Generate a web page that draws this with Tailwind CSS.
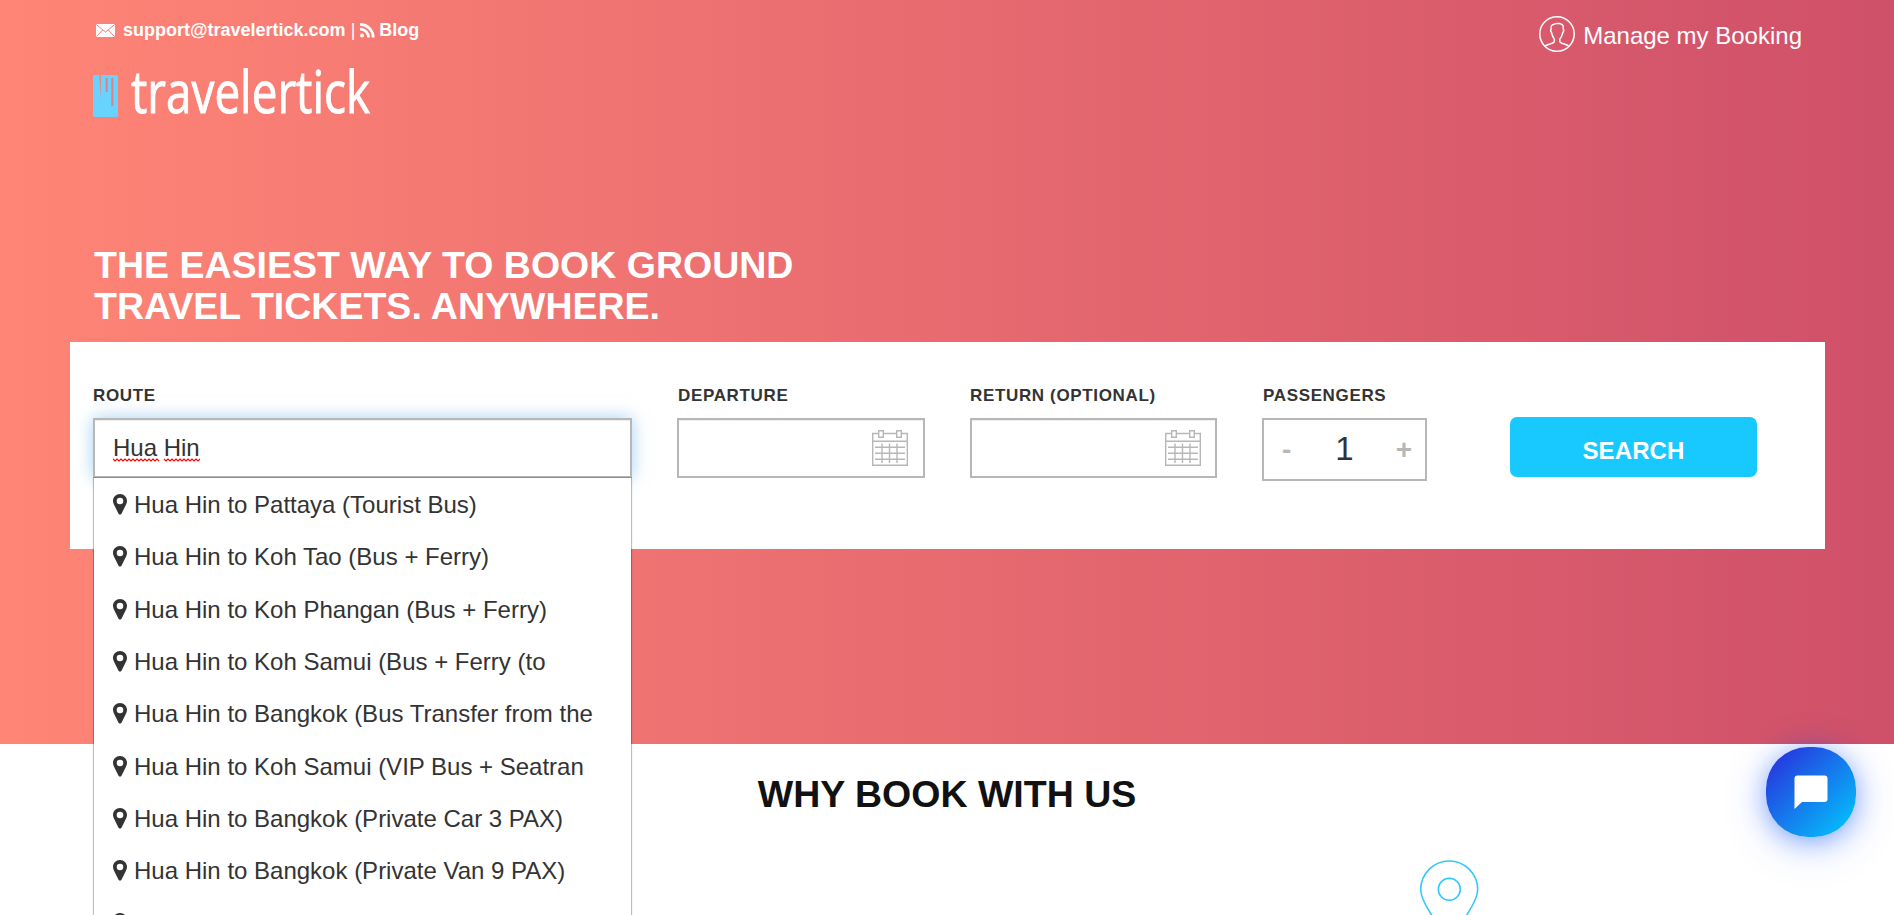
<!DOCTYPE html>
<html lang="en">
<head>
<meta charset="utf-8">
<title>Travelertick</title>
<script src="https://cdn.jsdelivr.net/npm/@tailwindcss/browser@4"></script>
</head>
<body class="h-[915px] overflow-hidden bg-white font-['Liberation_Sans',Arial,sans-serif] text-[#333]">
<svg class="hidden">
  <symbol id="pin" viewBox="0 0 14 21"><path fill="currentColor" fill-rule="evenodd" d="M7 0C3.100 0 0 3 0 6.800C0 7.900.200 8.900.700 9.900L5.500 19.700Q7 21.500 8.500 19.700L13.300 9.900C13.800 8.900 14 7.900 14 6.800C14 3 10.900 0 7 0ZM7 3.700A3.300 3.300 0 1 1 7 10.300A3.300 3.300 0 0 1 7 3.700Z"/></symbol>
  <symbol id="cal" viewBox="0 0 36 36"><g fill="none" stroke="#b7b7b7" stroke-width="1.400"><path d="M6.500 3.500H.700V35.300H35.300V3.500H29.500M11.500 3.500H24.500M.700 11.200H35.300M3 17.300H33M3 23.300H33M3 29.300H33M10 13.500V33M17.500 13.500V33M25 13.500V33"/><path d="M6.700.700h4.600v6.600H6.700zM24.700.700h4.600v6.600H24.700z"/></g></symbol>
</svg>
<div class="relative h-[915px] overflow-hidden">
  <header class="h-[744px] bg-[linear-gradient(to_right,#ff8576,#cf5069)] px-[70px]">
    <div class="flex h-[245px] justify-between px-[23px] text-white">
      <div class="pt-[19px]">
        <div class="flex h-[22px] items-center text-lg leading-[22px] font-bold">
          <svg class="ml-[3px] mr-[8px] h-[13px] w-[19px]" viewBox="0 0 19 13"><rect width="19" height="13" rx="1" fill="#fff"/><path d="M.5.700 9.500 8 18.500.7M.5 12.500 6.700 6M18.500 12.500 12.300 6" fill="none" stroke="#f87f75" stroke-width="1"/></svg>
          <span>support@travelertick.com</span>
          <span class="mx-[5px] font-normal">|</span>
          <svg class="mr-[4px] h-[15px] w-[15px]" viewBox="0 0 15 15"><g fill="none" stroke="#fff" stroke-width="2.800"><path d="M0 6.200A8.300 8.300 0 0 1 8.500 14.500M0 1.500A13 13 0 0 1 13.200 14.500"/></g><circle cx="2" cy="12.500" r="2" fill="#fff"/></svg>
          <span>Blog</span>
        </div>
        <svg class="mt-[1px] h-[110px] w-[290px] overflow-visible" viewBox="0 -20 290 110">
          <rect x="0" y="13" width="25" height="42" rx="1.500" fill="#68d3ff"/>
          <path d="M6.300 13h1.600v25z" fill="#f87f75"/><path d="M13.700 16V30M19.300 16V44" stroke="#dd8088" stroke-width="2"/>
          <text x="38" y="51" textLength="239" lengthAdjust="spacingAndGlyphs" font-family="Open Sans" font-size="59" fill="#fff" stroke="#fff" stroke-width=".9">travelertick</text>
        </svg>
      </div>
      <div class="-mr-px flex h-[68px] pt-[16px] text-2xl">
        <svg class="h-[36px] w-[36px]" viewBox="0 0 36 36" fill="none" stroke="#fff" stroke-width="1.500"><circle cx="18" cy="18" r="17.200"/><path d="M5.500 30.300C9 28 15.300 27.500 15.300 25.500V23C13.300 21 13 18 12.500 16.500C11.500 15.500 11.300 13.500 12.200 13C11.800 9.500 12.500 9 14 8.800C16 6.800 24.800 6.800 24.200 11V13C25 13.500 24.800 15.500 23.800 16.500C23.300 18 23 21 20.800 23V25.500C20.800 27.500 27 28 30.500 30.300"/></svg>
        <span class="ml-2 pt-2 leading-6">Manage my Booking</span>
      </div>
    </div>
    <h1 class="h-[97px] pl-6 text-[37.5px] leading-[41px] font-bold text-white">THE EASIEST WAY TO BOOK GROUND<br>TRAVEL TICKETS. ANYWHERE.</h1>
    <form class="flex h-[207px] w-[1755px] bg-white pl-[23px] pt-[44px] text-[17px] tracking-[0.65px]">
      <div class="w-[539px]">
        <label class="block h-8 leading-5 font-bold">ROUTE</label>
        <div class="relative h-[60px] border-2 border-[#b7b7b7] pl-[18px] text-2xl leading-[56px] tracking-normal shadow-[inset_0_1px_1px_rgba(0,0,0,.075),0_0_16px_rgba(102,175,233,.6)]">Hua Hin
          <svg class="absolute left-[18px] top-[38px] h-[4px] w-[87px]" viewBox="0 0 87 4" fill="none" stroke="#f00" stroke-width="1.200"><path d="M0 1l2 2 2-2 2 2 2-2 2 2 2-2 2 2 2-2 2 2 2-2 2 2 2-2 2 2 2-2 2 2 2-2 2 2 2-2 2 2 2-2 2 2 2-2 2 2M51 1l2 2 2-2 2 2 2-2 2 2 2-2 2 2 2-2 2 2 2-2 2 2 2-2 2 2 2-2 2 2 2-2 2 2 2-2"/></svg>
          <ul class="absolute -left-[2px] top-[57px] z-10 w-[539px] border border-black/20 bg-white bg-clip-padding pt-px pl-[19px] text-2xl shadow-[0_1px_2px_rgba(0,0,0,.1)]">
            <li class="flex h-[52.3px] items-center gap-[7px]"><svg class="mb-px h-[21px] w-3.5"><use href="#pin"/></svg>Hua Hin to Pattaya (Tourist Bus)</li>
            <li class="flex h-[52.3px] items-center gap-[7px]"><svg class="mb-px h-[21px] w-3.5"><use href="#pin"/></svg>Hua Hin to Koh Tao (Bus + Ferry)</li>
            <li class="flex h-[52.3px] items-center gap-[7px]"><svg class="mb-px h-[21px] w-3.5"><use href="#pin"/></svg>Hua Hin to Koh Phangan (Bus + Ferry)</li>
            <li class="flex h-[52.3px] items-center gap-[7px]"><svg class="mb-px h-[21px] w-3.5"><use href="#pin"/></svg>Hua Hin to Koh Samui (Bus + Ferry (to</li>
            <li class="flex h-[52.3px] items-center gap-[7px]"><svg class="mb-px h-[21px] w-3.5"><use href="#pin"/></svg>Hua Hin to Bangkok (Bus Transfer from the</li>
            <li class="flex h-[52.3px] items-center gap-[7px]"><svg class="mb-px h-[21px] w-3.5"><use href="#pin"/></svg>Hua Hin to Koh Samui (VIP Bus + Seatran</li>
            <li class="flex h-[52.3px] items-center gap-[7px]"><svg class="mb-px h-[21px] w-3.5"><use href="#pin"/></svg>Hua Hin to Bangkok (Private Car 3 PAX)</li>
            <li class="flex h-[52.3px] items-center gap-[7px]"><svg class="mb-px h-[21px] w-3.5"><use href="#pin"/></svg>Hua Hin to Bangkok (Private Van 9 PAX)</li>
            <li class="flex h-[52.3px] items-center gap-[7px]"><svg class="h-[21px] w-3.5"><use href="#pin"/></svg></li>
          </ul>
        </div>
      </div>
      <div class="ml-[45px] w-[248px]">
        <label class="block h-8 pl-px leading-5 font-bold">DEPARTURE</label>
        <div class="flex h-[60px] items-center justify-end border-2 border-[#b7b7b7] pr-[15px] shadow-[inset_0_1px_1px_rgba(0,0,0,.075)]"><svg class="h-9 w-9"><use href="#cal"/></svg></div>
      </div>
      <div class="ml-[45px] w-[247px]">
        <label class="block h-8 leading-5 font-bold">RETURN (OPTIONAL)</label>
        <div class="flex h-[60px] items-center justify-end border-2 border-[#b7b7b7] pr-[14px] shadow-[inset_0_1px_1px_rgba(0,0,0,.075)]"><svg class="h-9 w-9"><use href="#cal"/></svg></div>
      </div>
      <div class="ml-[45px] w-[165px]">
        <label class="block h-8 pl-px leading-5 font-bold">PASSENGERS</label>
        <div class="flex h-[63px] items-center justify-between border-2 border-[#b7b7b7] pl-[18px] pr-[13px] text-[28px] tracking-normal"><span class="font-bold text-[#b7b7b7]">-</span><span class="pr-0.5 pb-[3px] pl-1 text-[33px] leading-none">1</span><span class="font-bold text-[#b7b7b7]">+</span></div>
      </div>
      <button type="button" class="mt-[31px] ml-[83px] h-[60px] w-[247px] rounded-[7px] bg-[#18c9ff] pt-[7px] text-2xl font-bold tracking-[0.1px] text-white">SEARCH</button>
    </form>
  </header>
  <section>
    <h2 class="pt-[29px] text-center text-[37.5px] leading-[42px] font-bold text-[#111]">WHY BOOK WITH US</h2>
    <svg class="mt-[44px] ml-[1419px] h-[80px] w-[60px]" viewBox="0 0 60 80" fill="none" stroke="#2ac8fb" stroke-width="1.500"><path d="M26 79L12.900 56.500C8.500 49 1.700 40 1.700 30.500A28.500 28.500 0 0 1 58.700 30.500C58.700 40 52 49 47.500 56.500L34 79Z"/><circle cx="30.300" cy="30.300" r="11"/></svg>
  </section>
  <div class="absolute left-[1766px] top-[747px] flex h-[90px] w-[90px] items-center justify-center rounded-[42px] bg-linear-[135deg,#2a27da,#00ccff] shadow-[0_4px_24px_rgba(0,77,255,.4),0_8px_48px_rgba(0,77,255,.2)]">
    <svg class="h-[34px] w-[34px]" viewBox="0 0 34 34"><path fill="#fff" d="M3.500.5H30.500Q33.500.5 33.500 3.500V24Q33.500 27 30.500 27H8L.5 34V3.500Q.5.5 3.500.5Z"/></svg>
  </div>
</div>
</body>
</html>
